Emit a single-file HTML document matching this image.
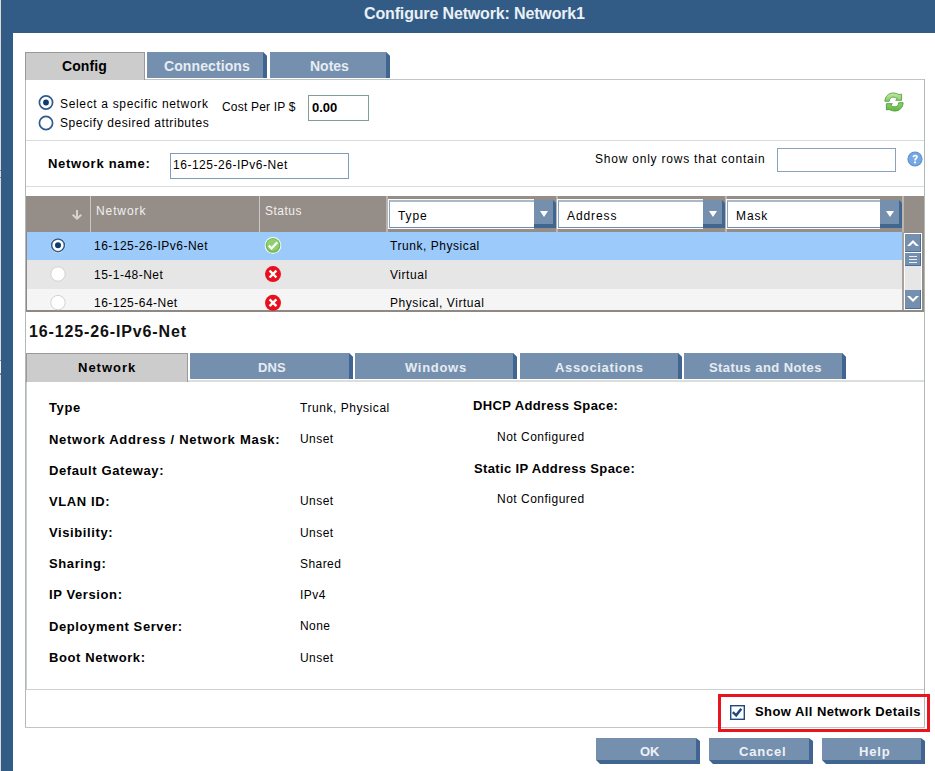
<!DOCTYPE html>
<html><head><meta charset="utf-8">
<style>
*{margin:0;padding:0;box-sizing:border-box}
html,body{width:935px;height:771px;overflow:hidden;background:#fff}
body{position:relative;font-family:"Liberation Sans",sans-serif;color:#000}
.a{position:absolute}
.t{position:absolute;white-space:nowrap;line-height:1;font-size:12px}
.b{font-weight:bold}
.tab{position:absolute;background:#7590ae;clip-path:polygon(0 0,calc(100% - 4px) 0,100% 4px,100% 100%,0 100%);color:#e6ecf2;font-weight:bold;font-size:14px;line-height:1;text-align:center}
.tab .s{position:absolute;right:0;top:0;bottom:0;width:4px;background:#3f6590}
.tab span{position:absolute;white-space:nowrap}
.btn{position:absolute;background:#3f6590;color:#eef2f7;font-weight:bold;font-size:13px;line-height:1;clip-path:polygon(0 0,calc(100% - 4px) 0,100% 3px,100% 100%,4px 100%,0 calc(100% - 4px))}
.btn i{position:absolute;left:0;top:0;right:4px;bottom:4px;background:#7590ae}
.btn span{position:absolute;white-space:nowrap}
.hl{position:absolute;background:#cbc7c4}
.dd{position:absolute;top:199px;height:30px}
.dd .in{position:absolute;left:0;top:0;height:30px;right:22px;background:#fff;border:1px solid #fbfbfb;border-right:none}
.dd .in i{position:absolute;left:0;top:0;right:0;bottom:0;border-top:2px solid #a9b9ca;border-left:1px solid #8aa3be;border-bottom:1px solid #6b8db0}
.dd .bt{position:absolute;right:0;top:1px;width:22px;height:28px;background:#41668f;clip-path:polygon(0 0,calc(100% - 3px) 0,100% 3px,100% 100%,0 100%)}
.dd .bt i{position:absolute;left:0;top:0;right:3px;bottom:4px;background:#7590ae}
.dd .bt b{position:absolute;left:5.5px;top:11px;width:0;height:0;border-left:4.5px solid transparent;border-right:4.5px solid transparent;border-top:6px solid #fff}
.dd span{position:absolute;left:9px;top:10px;font-size:12px;line-height:1;white-space:nowrap;letter-spacing:0.9px}
</style></head><body>

<!-- window frame -->
<div class="a" style="left:0;top:0;width:1px;height:771px;background:#dcd8d2"></div>
<div class="a" style="left:0;top:170px;width:1px;height:1px;background:#8a8680"></div>
<div class="a" style="left:0;top:171px;width:1px;height:6px;background:#cfe0ea"></div>
<div class="a" style="left:0;top:177px;width:1px;height:1px;background:#8a8680"></div>
<div class="a" style="left:0;top:360px;width:1px;height:1px;background:#8a8680"></div>
<div class="a" style="left:0;top:361px;width:1px;height:12px;background:#f0f0f0"></div>
<div class="a" style="left:0;top:373px;width:1px;height:2px;background:#8a8680"></div>
<div class="a" style="left:1px;top:0;width:934px;height:33px;background:#325c85"></div>
<div class="a" style="left:1px;top:33px;width:12px;height:738px;background:#325c85"></div>
<div class="t b" style="left:364px;top:6px;font-size:16px;color:#eaf0f6;letter-spacing:-0.15px">Configure Network: Network1</div>

<!-- top tabs -->
<div class="a" style="left:25px;top:52px;width:120px;height:28px;background:#cccccc;border:1px solid #999;border-bottom:none"></div>
<div class="t b" style="left:62px;top:59px;font-size:14px;letter-spacing:0.1px">Config</div>
<div class="tab" style="left:147px;top:52px;width:120px;height:26px"><div class="s"></div><span style="left:17px;top:7px;letter-spacing:0.1px">Connections</span></div>
<div class="tab" style="left:270px;top:52px;width:120px;height:26px"><div class="s"></div><span style="left:40px;top:7px;letter-spacing:0px">Notes</span></div>

<!-- main panel -->
<div class="a" style="left:145px;top:79px;width:780px;height:1px;background:#c0c6c6"></div>
<div class="a" style="left:25px;top:80px;width:1px;height:648px;background:#b0b8b8"></div>
<div class="a" style="left:924px;top:79px;width:1px;height:649px;background:#b0b8b8"></div>
<div class="a" style="left:25px;top:727px;width:900px;height:1px;background:#c0c6c6"></div>


<!-- row 1 -->
<svg class="a" style="left:38px;top:94px" width="17" height="37" viewBox="0 0 17 37">
<circle cx="8" cy="8.5" r="6.6" fill="#fff" stroke="#2f5b8a" stroke-width="1.7"/>
<circle cx="8" cy="8.5" r="2.9" fill="#0f3a6e"/>
<circle cx="8" cy="29" r="6.6" fill="#fff" stroke="#2f5b8a" stroke-width="1.7"/>
</svg>
<div class="t" style="left:60px;top:98px;letter-spacing:0.66px">Select a specific network</div>
<div class="t" style="left:60px;top:117px;letter-spacing:0.56px">Specify desired attributes</div>
<div class="t" style="left:222px;top:101px;letter-spacing:0.2px">Cost Per IP $</div>
<div class="a" style="left:308px;top:95px;width:61px;height:26px;border:1.5px solid #7f9f8f;background:#fff"></div>
<div class="t b" style="left:312px;top:101px;font-size:13px">0.00</div>
<svg class="a" style="left:884px;top:92px" width="20" height="20" viewBox="0 0 20 20">
<defs><linearGradient id="rg1" x1="0" y1="0" x2="0" y2="1"><stop offset="0" stop-color="#c2eaa8"/><stop offset="1" stop-color="#82cc60"/></linearGradient>
<linearGradient id="rg2" x1="0" y1="0" x2="0" y2="1"><stop offset="0" stop-color="#8ed46c"/><stop offset="1" stop-color="#5cb83c"/></linearGradient></defs>
<path d="M0.9 9.3 C1 4.6 4.6 1 9 1 C11.5 1 13.5 1.7 15 2.7 L17.6 2.1 L17.6 8.3 L11.7 8.3 L13.1 6.7 C12 5.7 10.6 5.1 9 5.1 C6.9 5.1 5.4 7 5.2 9.3 Z" fill="url(#rg1)" stroke="#5c9c4a" stroke-width="0.9" stroke-linejoin="round"/>
<path d="M19.1 10.7 C19 15.4 15.4 19 11 19 C8.5 19 6.5 18.3 5 17.3 L2.4 17.9 L2.4 11.7 L8.3 11.7 L6.9 13.3 C8 14.3 9.4 14.9 11 14.9 C13.1 14.9 14.6 13 14.8 10.7 Z" fill="url(#rg2)" stroke="#4f9a3a" stroke-width="0.9" stroke-linejoin="round"/>
</svg>
<div class="a" style="left:26px;top:140px;width:898px;height:1px;background:#d8dcdc"></div>

<!-- row 2 -->
<div class="t b" style="left:48px;top:157px;font-size:13px;letter-spacing:0.72px">Network name:</div>
<div class="a" style="left:170px;top:153px;width:179px;height:26px;border:1px solid #7f9db9;background:#fff"></div>
<div class="t" style="left:173px;top:159px;letter-spacing:0.52px">16-125-26-IPv6-Net</div>
<div class="t" style="left:595px;top:153px;letter-spacing:0.78px">Show only rows that contain</div>
<div class="a" style="left:777px;top:148px;width:119px;height:24px;border:1px solid #8aa2bd;background:#fff"></div>
<svg class="a" style="left:907px;top:151px" width="16" height="16" viewBox="0 0 16 16">
<circle cx="8" cy="8" r="7.6" fill="#5d93d6"/>
<circle cx="8" cy="8" r="6.5" fill="#77a8e2"/>
<path d="M5.6 6.2 C5.6 4.5 6.8 3.8 8.2 3.8 C9.8 3.8 10.8 4.7 10.8 6 C10.8 7.6 8.9 7.8 8.9 9.5 L7.2 9.5 C7.2 7.3 9 7.2 9 6.1 C9 5.5 8.6 5.2 8.1 5.2 C7.5 5.2 7.2 5.6 7.2 6.2 Z" fill="#fff"/>
<rect x="7.1" y="10.5" width="1.9" height="1.8" fill="#fff"/>
</svg>
<div class="a" style="left:26px;top:186px;width:898px;height:1px;background:#d8dcdc"></div>


<!-- grid -->
<div class="a" style="left:26px;top:196px;width:898px;height:36px;background:#958d88"></div>
<div class="hl" style="left:90px;top:196px;width:1px;height:36px"></div>
<div class="hl" style="left:259px;top:196px;width:1px;height:36px"></div>
<div class="hl" style="left:386px;top:196px;width:2px;height:36px;background:#bab5b1"></div>
<div class="hl" style="left:556px;top:196px;width:2px;height:36px;background:#bab5b1"></div>
<div class="hl" style="left:725px;top:196px;width:2px;height:36px;background:#bab5b1"></div>
<div class="hl" style="left:902px;top:196px;width:2px;height:36px;background:#bab5b1"></div>
<svg class="a" style="left:71px;top:209px" width="12" height="12" viewBox="0 0 12 12">
<path d="M5 1 H7 V7.5 L9.5 5 L11 6.5 L6 11 L1 6.5 L2.5 5 L5 7.5 Z" fill="#d6d2cf"/>
</svg>
<div class="t" style="left:96px;top:205px;color:#f2f0ee;letter-spacing:0.9px">Network</div>
<div class="t" style="left:265px;top:205px;color:#f2f0ee;letter-spacing:0.5px">Status</div>
<div class="dd" style="left:388px;width:168px"><div class="in"><i></i><span>Type</span></div><div class="bt"><i></i><b></b></div></div>
<div class="dd" style="left:557px;width:168px"><div class="in"><i></i><span>Address</span></div><div class="bt"><i></i><b></b></div></div>
<div class="dd" style="left:726px;width:176px"><div class="in"><i></i><span>Mask</span></div><div class="bt"><i></i><b></b></div></div>

<div class="a" style="left:27px;top:232px;width:875px;height:28px;background:#9ccbfb"></div>
<div class="a" style="left:27px;top:260px;width:875px;height:29px;background:#e6e6e6"></div>
<div class="a" style="left:27px;top:289px;width:875px;height:21px;background:#f5f5f5"></div>
<div class="a" style="left:26px;top:232px;width:1px;height:79px;background:#8f8883"></div>
<div class="a" style="left:902px;top:232px;width:22px;height:79px;background:#958d88"></div>
<div class="a" style="left:902px;top:232px;width:2px;height:79px;background:#a8a29e"></div>
<div class="a" style="left:26px;top:310px;width:898px;height:2px;background:#8f8883"></div>
<!-- scrollbar -->
<div class="a" style="left:904px;top:233px;width:18px;height:77px;background:#fff"></div>
<div class="a" style="left:905px;top:234px;width:16px;height:75px;background:#e6e6e6"></div>
<div class="a" style="left:905px;top:234px;width:16px;height:18px;background:#4a6f98"><div class="a" style="left:0;top:0;width:15px;height:17px;background:#7590ae"></div></div>
<svg class="a" style="left:905px;top:234px" width="16" height="18" viewBox="0 0 16 18"><path d="M2 12 L8 6 L14 12 L11 12 L8 9 L5 12 Z" fill="#fff"/></svg>
<div class="a" style="left:905px;top:252px;width:16px;height:1px;background:#fff"></div>
<div class="a" style="left:905px;top:253px;width:16px;height:13px;background:#4a6f98"><div class="a" style="left:0;top:0;width:15px;height:12px;background:#7590ae"></div></div>
<div class="a" style="left:909px;top:256px;width:8px;height:1px;background:#e8eef4"></div>
<div class="a" style="left:909px;top:259px;width:8px;height:1px;background:#e8eef4"></div>
<div class="a" style="left:909px;top:262px;width:8px;height:1px;background:#e8eef4"></div>
<div class="a" style="left:905px;top:290px;width:16px;height:19px;background:#4a6f98"><div class="a" style="left:0;top:0;width:15px;height:18px;background:#7590ae"></div></div>
<svg class="a" style="left:905px;top:290px" width="16" height="19" viewBox="0 0 16 19"><path d="M2 6 L8 12 L14 6 L11 6 L8 9 L5 6 Z" fill="#fff"/></svg>

<svg class="a" style="left:49px;top:236px" width="18" height="76" viewBox="0 0 18 76">
<circle cx="9" cy="9.3" r="7.4" fill="#fff"/>
<circle cx="9" cy="9.3" r="6.4" fill="#fff" stroke="#2f5b8a" stroke-width="1.5"/>
<circle cx="9" cy="9.3" r="3" fill="#0f3a6e"/>
<circle cx="9" cy="38" r="7.2" fill="#fff" stroke="#d2d2d2" stroke-width="1"/>
<circle cx="9" cy="66.6" r="7.2" fill="#fff" stroke="#d2d2d2" stroke-width="1"/>
</svg>
<div class="t" style="left:94px;top:240px;letter-spacing:0.48px">16-125-26-IPv6-Net</div>
<div class="t" style="left:94px;top:269px;letter-spacing:0.48px">15-1-48-Net</div>
<div class="t" style="left:94px;top:297px;letter-spacing:0.48px">16-125-64-Net</div>
<svg class="a" style="left:264px;top:236px" width="18" height="76" viewBox="0 0 18 76">
<circle cx="9" cy="9.4" r="8.3" fill="#fff"/>
<circle cx="9" cy="9.4" r="7.4" fill="#6fb94f"/>
<circle cx="9" cy="8.9" r="6.2" fill="#8fd06e"/>
<path d="M4.8 9.6 L7.6 12.3 L13.3 6.3" fill="none" stroke="#fff" stroke-width="2.3"/>
<circle cx="9" cy="38.1" r="8" fill="#e8101c"/>
<path d="M5.6 34.7 L12.4 41.5 M12.4 34.7 L5.6 41.5" stroke="#fff" stroke-width="2.4"/>
<circle cx="9" cy="66.8" r="8" fill="#e8101c"/>
<path d="M5.6 63.4 L12.4 70.2 M12.4 63.4 L5.6 70.2" stroke="#fff" stroke-width="2.4"/>
</svg>
<div class="t" style="left:390px;top:240px;letter-spacing:0.55px">Trunk, Physical</div>
<div class="t" style="left:390px;top:269px;letter-spacing:0.55px">Virtual</div>
<div class="t" style="left:390px;top:297px;letter-spacing:0.55px">Physical, Virtual</div>


<!-- heading -->
<div class="t b" style="left:29px;top:324px;font-size:16px;letter-spacing:0.87px;color:#111">16-125-26-IPv6-Net</div>

<!-- detail tabs -->
<div class="a" style="left:26px;top:353px;width:162px;height:29px;background:#cccccc;border:1px solid #999;border-bottom:none"></div>
<div class="t b" style="left:78px;top:361px;font-size:13px;letter-spacing:1px">Network</div>
<div class="tab" style="left:190px;top:353px;width:163px;height:26px"><div class="s"></div><span style="left:68px;top:8px;letter-spacing:0.1px;font-size:13px">DNS</span></div>
<div class="tab" style="left:355px;top:353px;width:162px;height:26px"><div class="s"></div><span style="left:50px;top:8px;letter-spacing:0.7px;font-size:13px">Windows</span></div>
<div class="tab" style="left:520px;top:353px;width:162px;height:26px"><div class="s"></div><span style="left:35px;top:8px;letter-spacing:0.65px;font-size:13px">Associations</span></div>
<div class="tab" style="left:684px;top:353px;width:162px;height:26px"><div class="s"></div><span style="left:25px;top:8px;letter-spacing:0.42px;font-size:13px">Status and Notes</span></div>
<div class="a" style="left:188px;top:380px;width:736px;height:2px;background:#dcdede"></div>

<!-- details -->
<div class="a" style="left:26px;top:382px;width:1px;height:308px;background:#c8cccc"></div>
<div class="a" style="left:26px;top:689px;width:898px;height:1px;background:#cdd1d1"></div>
<div class="t b" style="left:49px;top:401px;font-size:13px;letter-spacing:0.6px">Type</div>
<div class="t b" style="left:49px;top:433px;font-size:13px;letter-spacing:0.72px">Network Address / Network Mask:</div>
<div class="t b" style="left:49px;top:464px;font-size:13px;letter-spacing:0.6px">Default Gateway:</div>
<div class="t b" style="left:49px;top:495px;font-size:13px;letter-spacing:0.6px">VLAN ID:</div>
<div class="t b" style="left:49px;top:526px;font-size:13px;letter-spacing:0.6px">Visibility:</div>
<div class="t b" style="left:49px;top:557px;font-size:13px;letter-spacing:0.6px">Sharing:</div>
<div class="t b" style="left:49px;top:588px;font-size:13px;letter-spacing:0.6px">IP Version:</div>
<div class="t b" style="left:49px;top:620px;font-size:13px;letter-spacing:0.6px">Deployment Server:</div>
<div class="t b" style="left:49px;top:651px;font-size:13px;letter-spacing:0.6px">Boot Network:</div>

<div class="t" style="left:300px;top:402px;letter-spacing:0.55px">Trunk, Physical</div>
<div class="t" style="left:300px;top:433px;letter-spacing:0.43px">Unset</div>
<div class="t" style="left:300px;top:495px;letter-spacing:0.43px">Unset</div>
<div class="t" style="left:300px;top:527px;letter-spacing:0.43px">Unset</div>
<div class="t" style="left:300px;top:558px;letter-spacing:0.43px">Shared</div>
<div class="t" style="left:300px;top:589px;letter-spacing:0.43px">IPv4</div>
<div class="t" style="left:300px;top:620px;letter-spacing:0.43px">None</div>
<div class="t" style="left:300px;top:652px;letter-spacing:0.43px">Unset</div>

<div class="t b" style="left:473px;top:399px;font-size:13px;letter-spacing:0.38px">DHCP Address Space:</div>
<div class="t" style="left:497px;top:431px;letter-spacing:0.5px">Not Configured</div>
<div class="t b" style="left:474px;top:462px;font-size:13px;letter-spacing:0.36px">Static IP Address Space:</div>
<div class="t" style="left:497px;top:493px;letter-spacing:0.5px">Not Configured</div>

<!-- show all -->
<div class="a" style="left:718px;top:694px;width:212px;height:38px;border:3.5px solid #e8141e"></div>
<svg class="a" style="left:729px;top:704px" width="17" height="17" viewBox="0 0 17 17">
<rect x="1.7" y="1.7" width="13.6" height="13.6" fill="#fff" stroke="#1f4a7e" stroke-width="1.4"/>
<path d="M3.8 8.2 L7.2 11.3 L12.3 4.8" fill="none" stroke="#1f4a7e" stroke-width="2.5"/>
</svg>
<div class="t b" style="left:755px;top:705px;font-size:13px;letter-spacing:0.43px">Show All Network Details</div>

<!-- buttons -->
<div class="btn" style="left:596px;top:738px;width:104px;height:26px"><i></i><span style="left:44px;top:7px">OK</span></div>
<div class="btn" style="left:709px;top:738px;width:104px;height:26px"><i></i><span style="left:30px;top:7px;letter-spacing:0.8px">Cancel</span></div>
<div class="btn" style="left:822px;top:738px;width:103px;height:26px"><i></i><span style="left:37px;top:7px;letter-spacing:0.8px">Help</span></div>

</body></html>
